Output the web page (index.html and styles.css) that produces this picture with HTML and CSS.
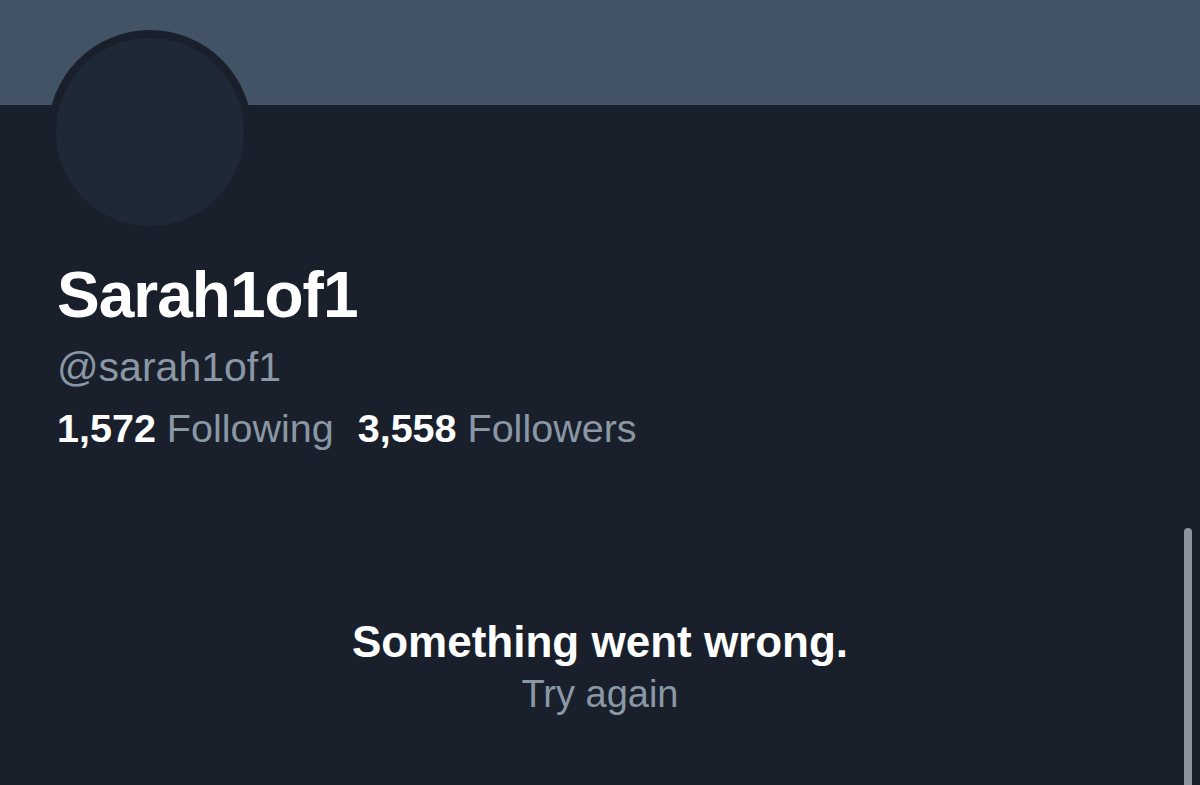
FILE: index.html
```html
<!DOCTYPE html>
<html>
<head>
<meta charset="utf-8">
<link rel="stylesheet" href="styles.css">
</head>
<body>
<div class="page">
  <div class="banner"></div>
  <div class="profile">
    <div class="avatar"></div>
    <div class="name">Sarah1of1</div>
    <div class="handle">@sarah1of1</div>
    <div class="stats">
      <span class="stat"><b>1,572</b> Following</span>
      <span class="stat"><b>3,558</b> Followers</span>
    </div>
  </div>
  <div class="error">
    <div class="error-title">Something went wrong.</div>
    <div class="error-retry">Try again</div>
  </div>
  <div class="scrollbar"></div>
</div>
</body>
</html>
```
FILE: styles.css
```css
html, body {
  margin: 0;
  padding: 0;
  background: #19202b;
  height: 100%;
  overflow: hidden;
}
.page {
  position: relative;
  width: 1200px;
  height: 785px;
  font-family: "Liberation Sans", Arial, sans-serif;
  color: #ffffff;
}
.banner {
  height: 105px;
  background: #425365;
}
.profile {
  padding-left: 57px;
}
.avatar {
  width: 188px;
  height: 188px;
  margin-top: -75px;
  margin-left: -9px;
  border-radius: 50%;
  background: #1f2836;
  border: 8px solid #19202b;
}
.name {
  margin-top: 29px;
  font-size: 64px;
  font-weight: bold;
  line-height: 64px;
  letter-spacing: -1px;
}
.handle {
  margin-top: 16px;
  font-size: 41px;
  line-height: 48px;
  color: #8a97a4;
}
.stats {
  margin-top: 14px;
  display: flex;
  gap: 24px;
  font-size: 39.5px;
  line-height: 46px;
  color: #8a97a4;
}
.stats b {
  color: #ffffff;
}
.error {
  margin-top: 165px;
  text-align: center;
}
.error-title {
  font-size: 44px;
  font-weight: bold;
  line-height: 52px;
}
.error-retry {
  margin-top: 4px;
  font-size: 38px;
  line-height: 44px;
  color: #8a97a4;
}
.scrollbar {
  position: absolute;
  right: 8px;
  top: 528px;
  width: 8px;
  bottom: 0;
  border-radius: 4px 4px 0 0;
  background: #8c939c;
}
```
